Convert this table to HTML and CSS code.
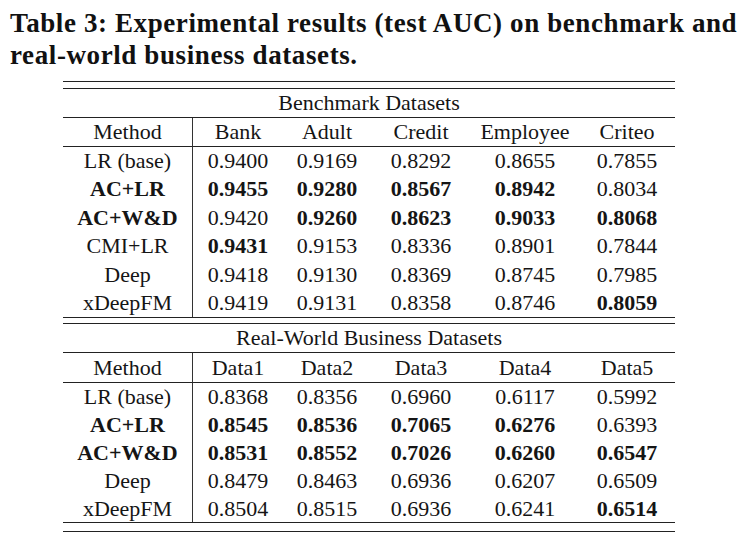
FILE: index.html
```html
<!DOCTYPE html>
<html lang="en">
<head>
<meta charset="utf-8">
<title>Table 3</title>
<link rel="stylesheet" href="styles.css">
</head>
<body>
<div class="page">
  <p class="caption">Table 3: Experimental results (test AUC) on benchmark and<br>real-world business datasets.</p>
  <div class="tbl">
    <table class="sec sec1">
      <colgroup><col class="c0"><col class="c1"><col class="c2"><col class="c3"><col class="c4"><col class="c5"></colgroup>
      <tr class="group"><th colspan="6">Benchmark Datasets</th></tr>
      <tr class="head"><th class="m">Method</th><th>Bank</th><th>Adult</th><th>Credit</th><th>Employee</th><th>Criteo</th></tr>
      <tr><td class="m">LR (base)</td><td>0.9400</td><td>0.9169</td><td>0.8292</td><td>0.8655</td><td>0.7855</td></tr>
      <tr><td class="m b">AC+LR</td><td class="b">0.9455</td><td class="b">0.9280</td><td class="b">0.8567</td><td class="b">0.8942</td><td>0.8034</td></tr>
      <tr><td class="m b">AC+W&amp;D</td><td>0.9420</td><td class="b">0.9260</td><td class="b">0.8623</td><td class="b">0.9033</td><td class="b">0.8068</td></tr>
      <tr><td class="m">CMI+LR</td><td class="b">0.9431</td><td>0.9153</td><td>0.8336</td><td>0.8901</td><td>0.7844</td></tr>
      <tr><td class="m">Deep</td><td>0.9418</td><td>0.9130</td><td>0.8369</td><td>0.8745</td><td>0.7985</td></tr>
      <tr class="last"><td class="m">xDeepFM</td><td>0.9419</td><td>0.9131</td><td>0.8358</td><td>0.8746</td><td class="b">0.8059</td></tr>
    </table>
    <table class="sec sec2">
      <colgroup><col class="c0"><col class="c1"><col class="c2"><col class="c3"><col class="c4"><col class="c5"></colgroup>
      <tr class="group"><th colspan="6">Real-World Business Datasets</th></tr>
      <tr class="head"><th class="m">Method</th><th>Data1</th><th>Data2</th><th>Data3</th><th>Data4</th><th>Data5</th></tr>
      <tr><td class="m">LR (base)</td><td>0.8368</td><td>0.8356</td><td>0.6960</td><td>0.6117</td><td>0.5992</td></tr>
      <tr><td class="m b">AC+LR</td><td class="b">0.8545</td><td class="b">0.8536</td><td class="b">0.7065</td><td class="b">0.6276</td><td>0.6393</td></tr>
      <tr><td class="m b">AC+W&amp;D</td><td class="b">0.8531</td><td class="b">0.8552</td><td class="b">0.7026</td><td class="b">0.6260</td><td class="b">0.6547</td></tr>
      <tr><td class="m">Deep</td><td>0.8479</td><td>0.8463</td><td>0.6936</td><td>0.6207</td><td>0.6509</td></tr>
      <tr class="last"><td class="m">xDeepFM</td><td>0.8504</td><td>0.8515</td><td>0.6936</td><td>0.6241</td><td class="b">0.6514</td></tr>
    </table>
  </div>
</div>
</body>
</html>
```
FILE: styles.css
```css
html, body {
  margin: 0;
  padding: 0;
  background: #ffffff;
}
body {
  font-family: "Liberation Serif", "Times New Roman", serif;
  color: #151515;
}
.page {
  width: 741px;
  height: 535px;
  overflow: hidden;
}
.caption {
  margin: 7px 0 0 10px;
  font-family: "Liberation Serif", "Times New Roman", serif;
  font-size: 27px;
  font-weight: bold;
  letter-spacing: 0.6px;
  line-height: 32px;
  color: #111;
  white-space: nowrap;
}
.tbl {
  width: 612px;
  margin: 10px 0 0 63px;
  border-top: 1px solid #222;
  border-bottom: 1px solid #222;
  padding: 6px 0 8px;
}
.sec {
  width: 612px;
  table-layout: fixed;
  border-collapse: separate;
  border-spacing: 0;
  border-top: 1px solid #222;
  border-bottom: 1px solid #222;
  font-family: "Liberation Serif", "Times New Roman", serif;
  font-size: 22px;
}
.sec2 {
  margin-top: 5px;
}
.c0 { width: 130px; }
.c1 { width: 90px; }
.c2 { width: 88px; }
.c3 { width: 100px; }
.c4 { width: 108px; }
.c5 { width: 96px; }
th, td {
  padding: 0;
  text-align: center;
  font-family: "Liberation Serif", "Times New Roman", serif;
  font-weight: normal;
  line-height: 28px;
  white-space: nowrap;
}
.group th {
  border-bottom: 1px solid #222;
}
.head th {
  border-bottom: 1px solid #222;
}
.sec2 .head th {
  line-height: 29px;
}
.m {
  border-right: 1px solid #333;
}
.sec1 td {
  line-height: 28.4px;
}
.sec2 td {
  line-height: 27.8px;
}
.b {
  font-weight: bold;
}
```
